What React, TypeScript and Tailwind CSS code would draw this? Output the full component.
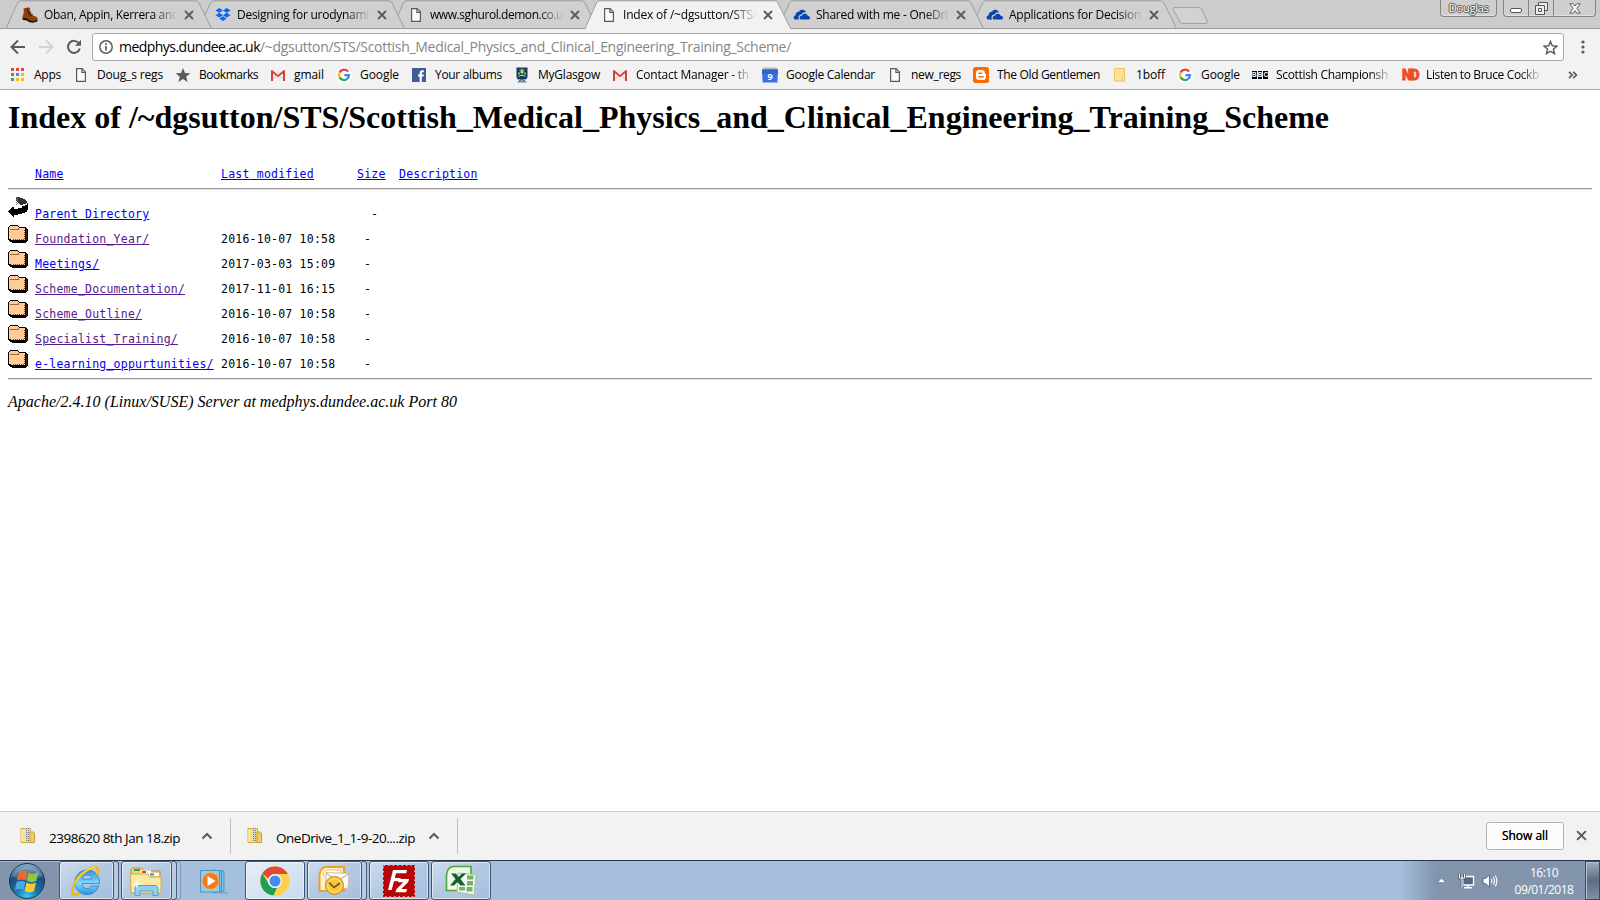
import { useLayoutEffect, useRef, type ReactNode } from 'react';

/** Single-line text whose tracking is tuned so that it spans `w` pixels. */
function Fit({ w, children, className = '' }: { w: number; children: string; className?: string }) {
  const ref = useRef<HTMLSpanElement>(null);
  useLayoutEffect(() => {
    const el = ref.current;
    if (!el) return;
    el.style.letterSpacing = '0px';
    const natural = el.getBoundingClientRect().width;
    el.style.letterSpacing = `${(w - natural) / children.length}px`;
  }, [w, children]);
  return (
    <span ref={ref} className={`inline-block whitespace-pre ${className}`}>
      {children}
    </span>
  );
}

const FileIcon = () => (
  <svg width="16" height="16" viewBox="0 0 16 16" fill="none" stroke="#5a5a5a" strokeWidth="1.2">
    <path d="M3.6 1.6h5.6l3.2 3.3v9.5H3.6z" fill="#fafafa" />
    <path d="M8.9 1.8v3.5h3.4" />
  </svg>
);

const BootIcon = () => (
  <svg width="16" height="16" viewBox="0 0 16 16">
    <path d="M1.500 1.500 6.500.3 8 1.500C7.400 4 8.500 6 10.500 8c1.500 1.300 4 1.200 5 3 .3 1.200.2 2-.3 2.800l-4.200 1-4-1.500L5.500 12H.8L.5 9.500C1.800 7 2.200 4 1.500 1.500z" fill="#8f400d" />
    <path d="M.5 10.800 5 11.500l2.500 1.700 3.700 1 4.300-1.500-.2 1.900-4.500 1.200-4-.8L5 13.400.9 13z" fill="#1c0d05" />
    <path d="M5 1.500 6 5l2.500 4M7.500 5.500l1.500-.5M9 8l1.500-.8" stroke="#43200a" strokeWidth="1.200" fill="none" />
  </svg>
);

const DropboxIcon = () => (
  <svg width="16" height="16" viewBox="0 0 16 16" fill="#0a66f0">
    <path d="M4.300 1 8 3.400 4.300 5.800.5 3.400zM11.700 1l3.800 2.400-3.800 2.400L8 3.400zM.5 8.200 4.300 5.800 8 8.200l-3.700 2.400zM11.700 5.800l3.800 2.400-3.800 2.400L8 8.200zM4.300 11.600 8 9.200l3.700 2.400L8 14z" />
  </svg>
);

const OneDriveIcon = () => (
  <svg width="18" height="16" viewBox="0 0 18 16" fill="#0b45ac">
    <path d="M1.800 12.500C0 11.500.4 8.500 2.600 8.200 2.600 6 4 4.600 6 4.800 7 2.800 9 2.400 10.700 3c1.200.4 1.800 1.300 2.200 2.400-2-.3-3.500.5-4.200 2-2.300.2-3.400 1.600-3.200 3.300 0 .7.300 1.300.8 1.800z" />
    <path d="M8 12.500c-2-.5-2-3.500.9-3.700.5-2.200 4.800-3.300 6 .1 2.600-.2 2.900 3 .9 3.600z" />
  </svg>
);

const GmailIcon = () => (
  <svg width="16" height="16" viewBox="0 0 16 16">
    <path d="M1.500 3h13v11h-13z" fill="#f0eeee" />
    <path d="m2 13 5-5M14 13 9 8" stroke="#d0cccc" strokeWidth="1" />
    <path d="M1 14V3.300h1.500L8 8l5.500-4.700H15V14h-2V6.300L8 10.300 3 6.300V14z" fill="#d54337" />
  </svg>
);

const GoogleIcon = () => (
  <svg width="16" height="16" viewBox="0 0 16 16">
    <circle cx="8" cy="8" r="8" fill="#fff" />
    <g fill="none" strokeWidth="2.300">
      <path d="M12.100 4.600A5 5 0 0 0 3.600 5.600" stroke="#ea4335" />
      <path d="M3.600 5.600a5 5 0 0 0 0 4.800" stroke="#fbbc05" />
      <path d="M3.600 10.400a5 5 0 0 0 7.600 1.500" stroke="#34a853" />
      <path d="M11.200 11.900A5 5 0 0 0 13 8.100H8.300" stroke="#4285f4" />
    </g>
  </svg>
);

const AppsIcon = () => {
  const colors = ['#ea4335', '#ea4335', '#ea4335', '#34a853', '#4285f4', '#fbbc05', '#34a853', '#fbbc05', '#fbbc05'];
  return (
    <svg width="16" height="16" viewBox="0 0 16 16" shapeRendering="crispEdges">
      {colors.map((c, i) => (
        <rect key={i} x={1 + (i % 3) * 5} y={1 + Math.floor(i / 3) * 5} width="3" height="3" fill={c} />
      ))}
    </svg>
  );
};

const StarIcon = () => (
  <svg width="16" height="16" viewBox="0 0 16 16">
    <path d="m8 1 2 5 5.300.3-4.100 3.400 1.400 5.200L8 12l-4.600 2.900 1.400-5.200L.7 6.300 6 6z" fill="#5a5a5a" />
  </svg>
);

const FacebookIcon = () => (
  <svg width="16" height="16" viewBox="0 0 16 16">
    <rect x="1" y="1" width="14" height="14" rx=".6" fill="#415a98" />
    <path d="M8.600 15V9.600H7V7.400h1.600V5.900c0-1.800 1.100-2.700 2.700-2.700h1.500v2.100h-1c-.8 0-1 .4-1 1v1.100h2l-.3 2.200h-1.700V15z" fill="#fff" />
  </svg>
);

const GlasgowIcon = () => (
  <svg width="16" height="16" viewBox="0 0 16 16">
    <path d="M2.500.5h11v9c0 2-1.500 3-3 3.500l2 2.500h-9l2-2.500c-2-.6-3-1.500-3-3.500z" fill="#143a5e" />
    <path d="M8 1.500v6M5.500 3.200h5" stroke="#8fc0d8" strokeWidth="1" />
    <path d="M4 5.500h2v2H4zM10 5.500h2v2h-2z" fill="#8fc31f" />
    <path d="M6.500 3.500h3V6h-3z" fill="#d8d23a" />
    <path d="M4.500 9.500c2-1.500 5-1.500 7 0M5 12.500c2 1 4 1 6 0M4.500 15h7" stroke="#dfeaf0" strokeWidth=".9" fill="none" />
  </svg>
);

const CalendarIcon = () => (
  <svg width="16" height="16" viewBox="0 0 16 16">
    <path d="M1 .5h14v3H1z" fill="#b9b9b9" />
    <path d="M0 2.500h16l-.6 13H.6z" fill="#3a6fe0" />
    <path d="M0 2.500h16V7H0z" fill="#3264cf" />
    <text x="8" y="12.500" fontSize="9" fontWeight="700" fontFamily="Open Sans, sans-serif" textAnchor="middle" fill="#fff">9</text>
  </svg>
);

const BloggerIcon = () => (
  <svg width="16" height="16" viewBox="0 0 16 16">
    <rect width="16" height="16" rx="2.500" fill="#ff6a00" />
    <path d="M6 3h3c1.800 0 2.800 1.200 2.800 2.800 0 1 .3 1.200 1.200 1.200v3c0 2-1.200 3-3 3H6c-1.800 0-3-1-3-3V6c0-1.800 1.200-3 3-3z" fill="#fff" />
    <path d="M6 6.200h2.500M6 9.800h4.200" stroke="#ff6a00" strokeWidth="1.400" strokeLinecap="round" />
  </svg>
);

const NoteIcon = () => (
  <svg width="16" height="16" viewBox="0 0 16 16">
    <path d="M2.500 1.500h10v12.500h-10z" fill="#ffe591" stroke="#eac65a" />
    <path d="M10 14c0-3 0-3.500 1.300-3.500s1.400.8 1.400 3.500z" fill="#fff0b8" stroke="#eac65a" />
  </svg>
);

const BbcIcon = () => (
  <span className="-mt-px flex h-[8px] w-4 gap-px">
    {['B', 'B', 'C'].map((c, i) => (
      <span key={i} className="flex h-[8px] w-[5px] items-center justify-center bg-black font-['Liberation_Sans',sans-serif] text-[6.500px] leading-[8px] font-bold text-white">
        {c}
      </span>
    ))}
  </span>
);

const NdIcon = () => (
  <span className="flex h-4 w-4 items-center justify-center font-['Roboto',sans-serif] text-[14px] leading-4 font-black tracking-[-1.500px] text-[#f04b23] [-webkit-text-stroke:0.8px_#f04b23]">ND</span>
);

const CloseX = ({ size = 10, color = '#5a5a5a' }: { size?: number; color?: string }) => (
  <svg width={size} height={size} viewBox="0 0 10 10" stroke={color} strokeWidth="1.800">
    <path d="m1 1 8 8M9 1 1 9" />
  </svg>
);

type TabInfo = { title: string; w: number; icon: ReactNode; layer: string; active?: boolean };

const tabs: TabInfo[] = [
  { title: 'Oban, Appin, Kerrera and', w: 135, icon: <BootIcon />, layer: 'z-[6]' },
  { title: 'Designing for urodynami', w: 132, icon: <DropboxIcon />, layer: 'z-[5]' },
  { title: 'www.sghurol.demon.co.u', w: 133, icon: <FileIcon />, layer: 'z-[4]' },
  { title: 'Index of /~dgsutton/STS/', w: 134, icon: <FileIcon />, layer: 'z-[7]', active: true },
  { title: 'Shared with me - OneDri', w: 132, icon: <OneDriveIcon />, layer: 'z-[3]' },
  { title: 'Applications for Decision', w: 132, icon: <OneDriveIcon />, layer: 'z-[2]' },
];

function Tab({ tab }: { tab: TabInfo }) {
  return (
    <div className={`relative -mr-[13px] h-[29px] w-[206px] shrink-0 ${tab.layer}`}>
      <svg className="absolute inset-0" width="206" height="29" viewBox="0 0 206 29">
        <path
          d="M0 28.500 11.500 3Q12.500 .8 15 .8H189.500Q192 .8 193 3L205.500 28.500"
          fill={tab.active ? '#f2f2f2' : '#d0d0d0'}
          stroke="#9b9b9b"
        />
        {tab.active ? <path d="M1 28.500H205" stroke="#f2f2f2" strokeWidth="1.500" /> : <path d="M0 28.500H206" stroke="#9b9b9b" />}
      </svg>
      <div className="relative flex h-[29px] items-center pl-[15px]">
        <span className="flex w-[18px] justify-center">{tab.icon}</span>
        <span className="ml-[5px] w-[137px] [mask-image:linear-gradient(to_right,#000_108px,transparent_134px)]">
          <Fit w={tab.w}>{tab.title}</Fit>
        </span>
        <span className="ml-[3px]">
          <CloseX />
        </span>
      </div>
    </div>
  );
}

const bookmarks: { label: string; w: number; icon: ReactNode; box: string; fade?: boolean }[] = [
  { label: 'Apps', w: 27, icon: <AppsIcon />, box: 'w-[63px]' },
  { label: 'Doug_s regs', w: 66, icon: <FileIcon />, box: 'w-[102px]' },
  { label: 'Bookmarks', w: 59, icon: <StarIcon />, box: 'w-[95px]' },
  { label: 'gmail', w: 30, icon: <GmailIcon />, box: 'w-[66px]' },
  { label: 'Google', w: 39, icon: <GoogleIcon />, box: 'w-[75px]' },
  { label: 'Your albums', w: 67, icon: <FacebookIcon />, box: 'w-[103px]' },
  { label: 'MyGlasgow', w: 62, icon: <GlasgowIcon />, box: 'w-[98px]' },
  { label: 'Contact Manager - th', w: 113, icon: <GmailIcon />, box: 'w-[150px]', fade: true },
  { label: 'Google Calendar', w: 89, icon: <CalendarIcon />, box: 'w-[125px]' },
  { label: 'new_regs', w: 50, icon: <FileIcon />, box: 'w-[86px]' },
  { label: 'The Old Gentlemen', w: 103, icon: <BloggerIcon />, box: 'w-[139px]' },
  { label: '1boff', w: 29, icon: <NoteIcon />, box: 'w-[65px]' },
  { label: 'Google', w: 39, icon: <GoogleIcon />, box: 'w-[75px]' },
  { label: 'Scottish Championsh', w: 112, icon: <BbcIcon />, box: 'w-[150px]', fade: true },
  { label: 'Listen to Bruce Cockb', w: 113, icon: <NdIcon />, box: 'w-[166px]', fade: true },
];

const FolderIcon = () => (
  <svg width="20" height="19" viewBox="0 0 20 19" shapeRendering="crispEdges">
    <path d="M2 1h8v1h8v1h1v1h1v12h-1v1h-1v1H4v-1H2v-1H1V2h1z" fill="#000" />
    <path d="M2 0h8v1h1v1h7v1h1v13h-2v1H3v-1H1v-1H0V2h1V1h1z" fill="#000" />
    <path d="M2 1h8v1h1v1h6v12H3v-1H1V2h1z" fill="#ffcc99" />
    <path d="M2 4.500h8v-1h1" stroke="#a86a30" fill="none" />
    <path d="M5 14.500h12" stroke="#7a4a20" strokeDasharray="1 1" />
    <path d="M16.500 5v10" stroke="#7a4a20" strokeDasharray="1 1" />
    <path d="M18 4h1v12h-1z" fill="#3a2410" />
  </svg>
);

const BackIcon = () => (
  <svg width="20" height="20" viewBox="0 0 20 20" shapeRendering="crispEdges">
    <path d="M8 0h4v1h3v1h2v1h1v1h1v2h-1v1h-3v1h-3V7h-1V6h-1V5H9V4H8z" fill="#333" />
    <path d="M8 .5h1M9 1.500h1M8 2.500h1M9 3.500h1M8 5.500h1M9 6.500h1M8 7.500h1" stroke="#777" />
    <path d="M19 6h1v7h-1v2h-2v1h-3v1h-4v1H6v2H5v-1H4v-1H3v-1H2v-1H1v-1H0v-1h1v-1h1v-1h1v-1h1v-1h2v2h4v-1h4V9h3V8h2z" fill="#000" />
  </svg>
);

const LINK = 'text-[#0000ee] underline';
const VISITED = 'text-[#551a8b] underline';

const rows = [
  { name: 'Foundation_Year/', date: '2016-10-07 10:58', cls: VISITED },
  { name: 'Meetings/', date: '2017-03-03 15:09', cls: LINK },
  { name: 'Scheme_Documentation/', date: '2017-11-01 16:15', cls: VISITED },
  { name: 'Scheme_Outline/', date: '2016-10-07 10:58', cls: VISITED },
  { name: 'Specialist_Training/', date: '2016-10-07 10:58', cls: VISITED },
  { name: 'e-learning_oppurtunities/', date: '2016-10-07 10:58', cls: LINK },
];

const ZipIcon = () => (
  <svg width="16" height="17" viewBox="0 0 16 17">
    <path d="M1 1.500h9.500v14H1z" fill="#f7e08a" stroke="#cfae4a" />
    <path d="M10 5h3.500l1 1.500v9H10z" fill="#f0cf68" stroke="#c39d3a" />
    <path d="M2 3v11" stroke="#fff6c8" />
    <path d="M7.500 1v14" stroke="#6e7690" strokeWidth="3" strokeDasharray="1 1" />
    <path d="M7.500 1v14" stroke="#c8cede" />
  </svg>
);

const Chevron = () => (
  <svg width="12" height="8" viewBox="0 0 12 8" fill="none" stroke="#5a5a5a" strokeWidth="2">
    <path d="m1.500 6.500 4.500-4.500 4.500 4.500" />
  </svg>
);

function Download({ name, w, box }: { name: string; w: number; box: string }) {
  return (
    <div className={`flex h-9 items-center border-r border-[#bdbdbd] ${box}`}>
      <span className="-mt-[1px]">
        <ZipIcon />
      </span>
      <span className="mt-[5px] ml-[13px] flex-1 text-[13.500px]">
        <Fit w={w}>{name}</Fit>
      </span>
      <span className="mr-[17px]">
        <Chevron />
      </span>
    </div>
  );
}

const StartOrb = () => (
  <svg width="38" height="38" viewBox="0 0 38 38">
    <defs>
      <radialGradient id="orb" cx=".5" cy=".95" r=".9">
        <stop offset="0" stopColor="#33d0f5" />
        <stop offset=".35" stopColor="#1878b0" />
        <stop offset=".75" stopColor="#1c4a78" />
        <stop offset="1" stopColor="#7fa6c8" />
      </radialGradient>
    </defs>
    <circle cx="19" cy="19" r="17.500" fill="url(#orb)" stroke="#1b3654" />
    <path d="M4 14a16 14 0 0 1 30 0c-9 5-21 5-30 0z" fill="#fff" opacity=".22" />
    <path d="M11 10c3-1.800 5.500-1.500 8.500 0l-1.900 8.500c-2.500-1.400-5-1.500-8.500 0z" fill="#ee6a2c" />
    <path d="M20.500 10.500c3 1.700 6 1.700 9.800-.3L28.300 19c-3 1.600-6 1.500-9.500 0z" fill="#93c83d" />
    <path d="M8.700 20c3-1.500 5.700-1.400 8.600 0L15.400 28c-2.500-1.500-5-1.500-8.600 0z" fill="#4fa7e4" />
    <path d="M18.500 20.500c3 1.600 6 1.600 9.500 0L26 29c-3 1.700-6 1.600-9.400 0z" fill="#fdc72e" />
  </svg>
);

const IeIcon = () => (
  <svg width="32" height="32" viewBox="0 0 32 32">
    <defs>
      <linearGradient id="ie" x1="0" y1="0" x2="0" y2="1">
        <stop offset="0" stopColor="#2a95dc" />
        <stop offset=".55" stopColor="#7fdcff" />
        <stop offset="1" stopColor="#2391dc" />
      </linearGradient>
    </defs>
    <path d="M29.500 18.500H12c.3 3.400 2.300 5 5 5 2 0 3.500-.8 4.400-2.500h7.300C27 26.500 22.600 29.500 17 29.500c-7.300 0-12-5-12-12s5-12.500 12-12.500c7.500 0 12.600 5 12.500 13.500zM22 14c-.4-2.600-2.200-4-4.900-4-2.600 0-4.500 1.400-5 4z" fill="url(#ie)" stroke="#1678bd" strokeWidth=".7" />
    <path d="M27 10c1.600-4 1.500-7-1.500-7.500C20 2 10 9 5.500 17c-4 7-4.500 12.500-.8 12.800 2 .1 4-1 5.300-2" fill="none" stroke="#f0b90c" strokeWidth="2.400" />
    <path d="M25.500 2.400C20 2 10 9 5.500 17" fill="none" stroke="#ffe45a" strokeWidth="1" />
  </svg>
);

const ExplorerIcon = () => (
  <svg width="34" height="32" viewBox="0 0 34 32">
    <path d="M2 28V5l1-2h10l2 3h16v22z" fill="#ecd27a" stroke="#b89340" />
    <path d="M5 4h6v2H5z" fill="#31a84c" />
    <path d="M12 5.500h10v3H12z" fill="#fff" />
    <path d="M13 6h4v2h-4z" fill="#d5472f" />
    <path d="M20 8h10v3H20z" fill="#fff" />
    <path d="M21 8.500h4v2h-4z" fill="#2d89cf" />
    <path d="M1.500 9h17l2 3H32v16H2z" fill="#f9e9a4" stroke="#cfae55" />
    <path d="M6 30.500V24c0-2 1-3.500 3-3.500h17c2 0 3 1.500 3 3.500v6.500h-5V26H11v4.500z" fill="#8fd0ee" stroke="#4ba3cf" />
    <path d="m8 14 1 4 4 1-4 1-1 4-1-4-4-1 4-1z" fill="#e9fbff" />
  </svg>
);

const PlayerIcon = () => (
  <svg width="30" height="28" viewBox="0 0 30 28">
    <path d="m14 3 11 1v20l-11 2z" fill="#7cc0e6" stroke="#4a94c4" />
    <path d="M22.500 4v21" stroke="#4a94c4" />
    <path d="M1.500 3.500h19v21.500h-19z" fill="#8ecdf0" stroke="#4a94c4" />
    <path d="M21 26h8" stroke="#5b7c9c" opacity=".6" />
    <circle cx="11.500" cy="14" r="8.500" fill="#f07c1c" stroke="#fbb36a" />
    <path d="m8.500 9 8 5-8 5z" fill="#fff" />
  </svg>
);

const ChromeIcon = () => (
  <svg width="30" height="30" viewBox="0 0 30 30">
    <circle cx="15" cy="15" r="14.700" fill="#fdd24a" />
    <path d="M2.300 7.600A14.700 14.700 0 0 1 27.800 8H15a7 7 0 0 0-6.500 4.500z" fill="#dc4a3d" />
    <path d="M2.300 7.600 9 18.500a7 7 0 0 0 8 3.200l-3.500 7.900A14.700 14.700 0 0 1 2.300 7.600z" fill="#1c9f5c" />
    <path d="M15 8h12.800A14.700 14.700 0 0 1 13.500 29.600L21 18.500A7 7 0 0 0 15 8z" fill="#fdd24a" />
    <circle cx="15" cy="15" r="6.900" fill="#f4f4f4" />
    <circle cx="15" cy="15" r="5.500" fill="#4688f4" />
  </svg>
);

const OutlookIcon = () => (
  <svg width="32" height="32" viewBox="0 0 32 32">
    <path d="M8 2h18v24H1.500V10C2 5.500 4 2.500 8 2z" fill="#fdf1d2" stroke="#f0a01c" strokeWidth="2" />
    <path d="M9 5h14v5H5c.5-3 2-4.500 4-5z" fill="#fff" stroke="#f3bd60" />
    <path d="m8 7.500 23 1L30 23l-22 3z" fill="#fafafa" stroke="#c9c0ae" />
    <path d="m8 8 10.500 8L31 9" fill="none" stroke="#c8a468" />
    <circle cx="16.500" cy="20.500" r="9" fill="#fbc53a" stroke="#c98a10" />
    <circle cx="16.500" cy="20.500" r="6.800" fill="none" stroke="#fde08a" />
    <path d="m11 17.500 5 5 6-4.500" fill="none" stroke="#6d5414" strokeWidth="1.600" />
  </svg>
);

const FileZillaIcon = () => (
  <svg width="32" height="32" viewBox="0 0 32 32">
    <rect width="32" height="32" fill="#b50505" />
    <rect x=".5" y=".5" width="31" height="31" fill="none" stroke="#f0dada" strokeDasharray="1.500 3" opacity=".8" />
    <path d="M10 5h14l-.8 3.200H13l-1.200 4.800h6l-.8 3.200h-6L8.700 25H5z" fill="#fff" />
    <path d="M16 14h10l-.8 3-7 7H24l-.8 3.200H12.500l.8-3 7-7H15.200z" fill="#fff" />
  </svg>
);

const ExcelIcon = () => (
  <svg width="32" height="32" viewBox="0 0 32 32">
    <path d="M8 1.500h18v24H1.500V10C2 5.500 4 2 8 1.500z" fill="#eef8e8" stroke="#4aa838" strokeWidth="1.600" />
    <path d="m13 8 18 1.500L29 30l-17-3z" fill="#f6faf4" stroke="#a8bfa0" />
    <path d="M22 10.500h6.500v4H22zM22 16h6v4.500h-6zM21.500 22h6v4.500h-6zM14 22h6v3.500h-6z" fill="#6fb562" />
    <path d="M6 8.500h5l2.500 3.500L17 8.500h4l-5.500 5.500 5 6.500h-5L12.500 17 9 20.500H5l5.500-6.500z" fill="#17602a" />
  </svg>
);

const EDGE = 'h-full rounded-[3px] border border-[#3f5572] shadow-[inset_0_0_0_1px_rgba(255,255,255,0.55)]';

function TaskButton({ icon, box, stack = 0, bright }: { icon: ReactNode; box: string; stack?: number; bright?: boolean }) {
  return (
    <div className="flex h-[39px]">
      <div
        className={`flex items-center justify-center pr-px ${EDGE} ${box} ${
          bright ? 'bg-gradient-to-br from-[#e6edf6] to-[#c9daee]' : 'bg-gradient-to-br from-[#cddcee] via-[#b3c8e2] to-[#a7bfdd]'
        }`}
      >
        {icon}
      </div>
      {stack > 0 && <div className="h-full w-[5px] rounded-r-[3px] border-y border-r border-[#4b617e] bg-[#b7cbe3]" />}
      {stack > 1 && <div className="h-full w-1 rounded-r-[3px] border-y border-r border-[#7f97b6] bg-[#b0c6e0]" />}
    </div>
  );
}

export default function App() {
  return (
    <div className="flex h-[900px] w-[1600px] flex-col overflow-hidden bg-white font-['Open_Sans','Noto_Sans',sans-serif] text-[12px] text-black">
      <div className="relative flex h-[29px] shrink-0 border-b border-[#9b9b9b] bg-[#cccccc]">
        <div className="flex h-[29px] pl-[6px]">
          {tabs.map((t) => (
            <Tab key={t.title} tab={t} />
          ))}
        </div>
        <svg className="mt-[6px] ml-[8px]" width="38" height="20" viewBox="0 0 38 20">
          <path d="M2 1.500h25q1.800 0 2.600 1.600l5.700 12q.8 2.400-1.400 2.400H10.500q-1.800 0-2.600-1.600L1.500 4Q.6 1.500 2 1.500z" fill="#d2d2d2" stroke="#a2a2a2" />
        </svg>
        <div className="ml-auto flex h-[17px] pr-[4px]">
          <div className="mr-[6px] flex h-[17px] w-[57px] items-center justify-center rounded-b-[4px] border border-t-0 border-[#858585] bg-[#cfcfcf] shadow-[inset_0_-1px_0_#e2e2e2]">
            <Fit w={40} className="text-[11.500px] text-white [text-shadow:1px_0_0_#555,-1px_0_0_#555,0_1px_0_#555,0_-1px_0_#555]">Douglas</Fit>
          </div>
          <div className="flex h-[17px] w-[93px] rounded-b-[4px] border border-t-0 border-[#858585] bg-[#cfcfcf] shadow-[inset_0_-1px_0_#e2e2e2]">
            <span className="flex w-[25px] items-end justify-center border-r border-[#858585] pb-[3px]">
              <span className="h-[5px] w-3 rounded-[2px] border border-[#555] bg-white" />
            </span>
            <span className="flex w-[25px] items-center justify-center border-r border-[#858585]">
              <svg width="13" height="13" viewBox="0 0 13 13" fill="#eee" stroke="#555">
                <path d="M3.500.5h9v8h-9z" />
                <path d="M.5 3.500h9v9h-9z" />
                <path d="M3.500 6.500h3v3h-3z" />
              </svg>
            </span>
            <span className="flex flex-1 items-center justify-center">
              <svg width="12" height="11" viewBox="0 0 12 11" fill="#f4f4f4" stroke="#555" strokeWidth=".9">
                <path d="M.8.7h3.400L6 3 7.800.7h3.400L7.900 5.300l3.300 4.900H7.800L6 7.700l-1.800 2.500H.8l3.300-4.900z" />
              </svg>
            </span>
          </div>
        </div>
      </div>

      <div className="flex h-[61px] shrink-0 flex-col border-b border-[#adadad] bg-[#f2f2f2]">
        <div className="flex h-[32px] items-end">
          <div className="flex h-7 items-center">
            <svg className="ml-[10px]" width="16" height="16" viewBox="0 0 16 16" fill="none" stroke="#5a5a5a" strokeWidth="2">
              <path d="M15 8H2.500M8 1.500 1.500 8 8 14.500" />
            </svg>
            <svg className="ml-[12px]" width="16" height="16" viewBox="0 0 16 16" fill="none" stroke="#d3d3d3" strokeWidth="2">
              <path d="M1 8h12.500M8 1.500 14.500 8 8 14.500" />
            </svg>
            <svg className="ml-[12px]" width="16" height="16" viewBox="0 0 16 16" fill="none" stroke="#5a5a5a" strokeWidth="2">
              <path d="M13 4.500A6 6 0 1 0 13.800 9.500" />
              <path d="M15 .8v6H9z" fill="#5a5a5a" stroke="none" />
            </svg>
          </div>
          <div className="ml-[10px] flex h-7 w-[1472px] items-center rounded-[3px] border border-[#a9a9a9] bg-white pr-[5px] pl-[6px]">
            <svg width="14" height="14" viewBox="0 0 14 14" fill="none" stroke="#5a5a5a">
              <circle cx="7" cy="7" r="6.200" strokeWidth="1.500" />
              <path d="M7 6v4.500M7 3.300v1.700" strokeWidth="1.700" />
            </svg>
            <span className="-mt-px ml-[6px] flex-1 text-[14px]">
              <Fit w={141}>medphys.dundee.ac.uk</Fit>
              <Fit w={531} className="text-[#868686]">/~dgsutton/STS/Scottish_Medical_Physics_and_Clinical_Engineering_Training_Scheme/</Fit>
            </span>
            <svg width="15" height="15" viewBox="0 0 16 16" fill="none" stroke="#5a5a5a" strokeWidth="1.500">
              <path d="m8 1.500 1.900 4.600 5 .4-3.800 3.300 1.200 4.800L8 12l-4.300 2.600 1.200-4.800L1.100 6.500l5-.4z" />
            </svg>
          </div>
          <div className="flex h-7 flex-1 items-center justify-center pl-px">
            <svg width="4" height="14" viewBox="0 0 4 14" fill="#5a5a5a">
              <circle cx="2" cy="2" r="1.600" />
              <circle cx="2" cy="7" r="1.600" />
              <circle cx="2" cy="12" r="1.600" />
            </svg>
          </div>
        </div>
        <div className="flex h-[28px] items-center pl-[10px]">
          {bookmarks.map((b, i) => (
            <div key={i} className={`flex shrink-0 items-center ${b.box}`}>
              <span className="flex w-4 justify-center">{b.icon}</span>
              <span className={`ml-2 ${b.fade ? '[mask-image:linear-gradient(to_right,#000_94px,transparent_116px)]' : ''}`}>
                <Fit w={b.w}>{b.label}</Fit>
              </span>
            </div>
          ))}
          <svg width="10" height="8" viewBox="0 0 10 8" fill="none" stroke="#5a5a5a" strokeWidth="1.700">
            <path d="m1 .8 3.200 3.200L1 7.200M5.200.8 8.400 4 5.200 7.200" />
          </svg>
        </div>
      </div>

      <main className="flex-1 px-2">
        <h1 className="pt-[9px] font-['Liberation_Serif',serif] text-[32px] leading-[37px] font-bold">
          <Fit w={1321}>Index of /~dgsutton/STS/Scottish_Medical_Physics_and_Clinical_Engineering_Training_Scheme</Fit>
        </h1>
        <div className="mt-[26px] font-['DejaVu_Sans_Mono',monospace] text-[11.500px] leading-[16px] tracking-[0.224px] whitespace-pre">
          <div className="flex h-[26px] items-start pt-[4px] pl-[27px]">
            <span className="w-[186px]"><span className={LINK}>Name</span></span>
            <span className="w-[136px]"><span className={LINK}>Last modified</span></span>
            <span className="w-[42px]"><span className={LINK}>Size</span></span>
            <span className={LINK}>Description</span>
          </div>
          <div className="h-[2px] border-t border-b border-t-[#9a9a9a] border-b-[#e4e4e4]" />
          <div className="mt-[7px] flex h-[25px]">
            <span className="w-[27px]"><BackIcon /></span>
            <span className="w-[336px] pt-[9px]"><span className={LINK}>Parent Directory</span></span>
            <span className="pt-[9px]">-</span>
          </div>
          {rows.map((r) => (
            <div key={r.name} className="flex h-[25px]">
              <span className="w-[27px] pt-[3px]"><FolderIcon /></span>
              <span className="w-[186px] pt-[9px]"><span className={r.cls}>{r.name}</span></span>
              <span className="w-[143px] pt-[9px]">{r.date}</span>
              <span className="pt-[9px]">-</span>
            </div>
          ))}
          <div className="mt-[6px] h-[2px] border-t border-b border-t-[#9a9a9a] border-b-[#e4e4e4]" />
        </div>
        <div className="mt-[12px] font-['Liberation_Serif',serif] text-[16px] leading-[19px] italic">
          <Fit w={449}>Apache/2.4.10 (Linux/SUSE) Server at medphys.dundee.ac.uk Port 80</Fit>
        </div>
      </main>

      <div className="flex h-[49px] shrink-0 items-center border-t border-[#cdcdcd] bg-[#f2f2f2]">
        <Download name="2398620 8th Jan 18.zip" w={131} box="w-[231px] pl-5" />
        <Download name="OneDrive_1_1-9-20....zip" w={139} box="w-[227px] pl-4" />
        <div className="mr-[12px] ml-auto flex h-[28px] w-[78px] items-center justify-center rounded-[3px] border border-[#b3b3b3] bg-[#fbfbfb] pb-px [text-shadow:0_0_0.5px_#000]">
          <Fit w={46}>Show all</Fit>
        </div>
        <span className="-mt-px mr-[13px]">
          <CloseX size={11} />
        </span>
      </div>

      <div className="flex h-10 shrink-0 border-t border-[#27384e] bg-[#a6bfdd]">
        <div className="flex h-full w-[59px] items-center bg-[#8395ad] pl-2 shadow-[inset_0_1px_0_#a8b8cc]">
          <StartOrb />
        </div>
        <TaskButton icon={<IeIcon />} box="w-[55px]" stack={1} />
        <div className="w-[2px]" />
        <TaskButton icon={<ExplorerIcon />} box="w-[51px]" stack={2} />
        <div className="flex h-full w-[64px] items-center pl-[18px]">
          <PlayerIcon />
        </div>
        <TaskButton icon={<ChromeIcon />} box="w-[60px]" bright />
        <div className="w-[2px]" />
        <TaskButton icon={<OutlookIcon />} box="w-[55px]" stack={1} />
        <div className="w-[2px]" />
        <TaskButton icon={<FileZillaIcon />} box="w-[60px]" />
        <div className="w-[2px]" />
        <TaskButton icon={<ExcelIcon />} box="w-[60px]" />
        <div className="ml-auto flex h-full w-[200px] items-center bg-gradient-to-r from-[#a6bfdd] to-[#8395ad] to-[18%] text-white">
          <svg className="ml-[37px]" width="9" height="5" viewBox="0 0 9 5">
            <path d="M4.500.3 8.500 4.500h-8z" fill="#fff" stroke="#44566e" strokeWidth=".4" />
          </svg>
          <svg className="ml-[12px]" width="17" height="16" viewBox="0 0 17 16" fill="none">
            <path d="M5 3.500h10.500v8.500H5z" fill="#56687f" stroke="#fff" strokeWidth="1.300" />
            <path d="M6 14.700h8M10 12v2.500" stroke="#fff" strokeWidth="1.400" />
            <path d="M1.500 1v4h5V1M4 .5V5M4 5v10" stroke="#2b3b50" strokeWidth="2.400" />
            <path d="M1.500 1v4h5V1M4 .5V5M4 5v10" stroke="#fff" strokeWidth="1.200" />
          </svg>
          <svg className="ml-[7px]" width="16" height="16" viewBox="0 0 16 16" fill="none" stroke="#fff">
            <path d="M1 5.500h2.500L7.500 2v12l-4-3.500H1z" fill="#fff" stroke="#3b4c64" strokeWidth=".7" />
            <path d="M9.300 6q1.200 2 0 4M11.300 4.300q2.300 3.700 0 7.400M13.300 2.800q3.200 5.200 0 10.400" strokeWidth="1.100" />
          </svg>
          <div className="ml-[16px] flex w-[60px] flex-col items-center leading-[17px]">
            <Fit w={28}>16:10</Fit>
            <Fit w={59}>09/01/2018</Fit>
          </div>
          <div className="ml-auto h-full w-[15px] border border-[#3c4a5e] bg-gradient-to-b from-[#a2aebf] via-[#5d6c82] to-[#7e90a8] shadow-[inset_1px_1px_0_#b6c2d2]" />
        </div>
      </div>
    </div>
  );
}
